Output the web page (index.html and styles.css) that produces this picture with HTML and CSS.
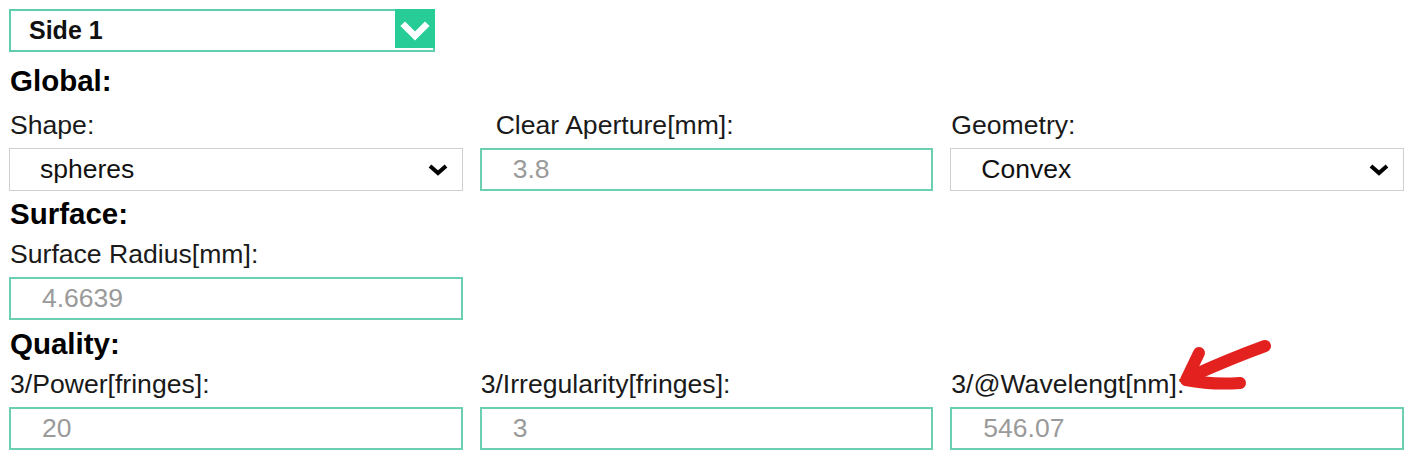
FILE: index.html
```html
<!DOCTYPE html>
<html lang="en">
<head>
<meta charset="utf-8">
<title>Side settings</title>
<link rel="stylesheet" href="styles.css">
</head>
<body>
<div class="page">
  <div class="side-select">
    <span class="side-value">Side 1</span>
    <span class="side-arrow">
      <svg width="40" height="42" viewBox="0 0 40 42"><path d="M10 18 L20 28 L30 18" fill="none" stroke="#fff" stroke-width="6.5" stroke-linecap="square"/></svg>
    </span>
  </div>

  <section class="section section-first">
    <h2 class="heading heading-first">Global:</h2>
    <div class="grid">
      <div class="field">
        <div class="label">Shape:</div>
        <div class="control select"><span>spheres</span><svg class="chev" width="22" height="14" viewBox="0 0 22 14"><path d="M3 3 L11 10 L19 3" fill="none" stroke="#000" stroke-width="4"/></svg></div>
      </div>
      <div class="field">
        <div class="label label-indent">Clear Aperture[mm]:</div>
        <div class="control input">3.8</div>
      </div>
      <div class="field">
        <div class="label">Geometry:</div>
        <div class="control select"><span>Convex</span><svg class="chev" width="22" height="14" viewBox="0 0 22 14"><path d="M3 3 L11 10 L19 3" fill="none" stroke="#000" stroke-width="4"/></svg></div>
      </div>
    </div>
  </section>

  <section class="section">
    <h2 class="heading">Surface:</h2>
    <div class="grid">
      <div class="field">
        <div class="label">Surface Radius[mm]:</div>
        <div class="control input">4.6639</div>
      </div>
    </div>
  </section>

  <section class="section section-last">
    <h2 class="heading">Quality:</h2>
    <div class="grid">
      <div class="field">
        <div class="label">3/Power[fringes]:</div>
        <div class="control input">20</div>
      </div>
      <div class="field">
        <div class="label">3/Irregularity[fringes]:</div>
        <div class="control input">3</div>
      </div>
      <div class="field">
        <div class="label">3/@Wavelengt[nm]:</div>
        <div class="control input">546.07</div>
      </div>
    </div>
  </section>

  <svg class="annotation" width="1412" height="456" viewBox="0 0 1412 456">
    <path d="M1265 346 Q1232 358 1194 375" fill="none" stroke="#e3211f" stroke-width="12" stroke-linecap="round"/>
    <path d="M1199 353 L1186 380 Q1212 385 1240 383" fill="none" stroke="#e3211f" stroke-width="12" stroke-linecap="round" stroke-linejoin="round"/>
  </svg>
</div>
</body>
</html>
```

FILE: styles.css
```css
* { box-sizing: border-box; }

html, body {
  margin: 0;
  padding: 0;
  background: #ffffff;
}

body {
  font-family: "Liberation Sans", Arial, sans-serif;
  color: #1a1a1a;
}

.page {
  position: relative;
  padding: 9px 8px 9px 9px;
  width: 1412px;
  height: 456px;
  overflow: hidden;
}

.side-select {
  display: flex;
  align-items: stretch;
  width: 426px;
  height: 43px;
  border: 2px solid #5fcdae;
}

.side-value {
  flex: 1;
  display: flex;
  align-items: center;
  padding-left: 18px;
  font-size: 25px;
  font-weight: bold;
  color: #111;
}

.side-arrow {
  width: 40px;
  margin: -2px -2px 2px 0;
  background: #27cc97;
  display: flex;
  align-items: center;
  justify-content: center;
}

.section { margin-top: 7px; }
.section-first { margin-top: 13px; }
.section-last { margin-top: 8px; }

.heading {
  margin: 0 0 9px 1px;
  font-size: 29.5px;
  line-height: 32px;
  font-weight: bold;
  color: #000;
}
.heading-first { margin-bottom: 13px; }

.grid {
  display: grid;
  grid-template-columns: repeat(3, 1fr);
  column-gap: 17px;
}

.label {
  font-size: 26.6px;
  line-height: 30px;
  margin: 0 0 8px 1px;
  color: #1a1a1a;
  white-space: nowrap;
}
.label-indent { padding-left: 15px; }

.control {
  height: 43px;
  display: flex;
  align-items: center;
  font-size: 26.5px;
  background: #fff;
}

.input {
  border: 2px solid #6ccfb2;
  padding-left: 31px;
  color: #9a9a9a;
}

.select {
  border: 1px solid #cfcfcf;
  padding-left: 30px;
  padding-right: 13px;
  color: #111;
  justify-content: space-between;
}

.chev { display: block; }

.annotation {
  position: absolute;
  left: 0;
  top: 0;
  pointer-events: none;
}
```
